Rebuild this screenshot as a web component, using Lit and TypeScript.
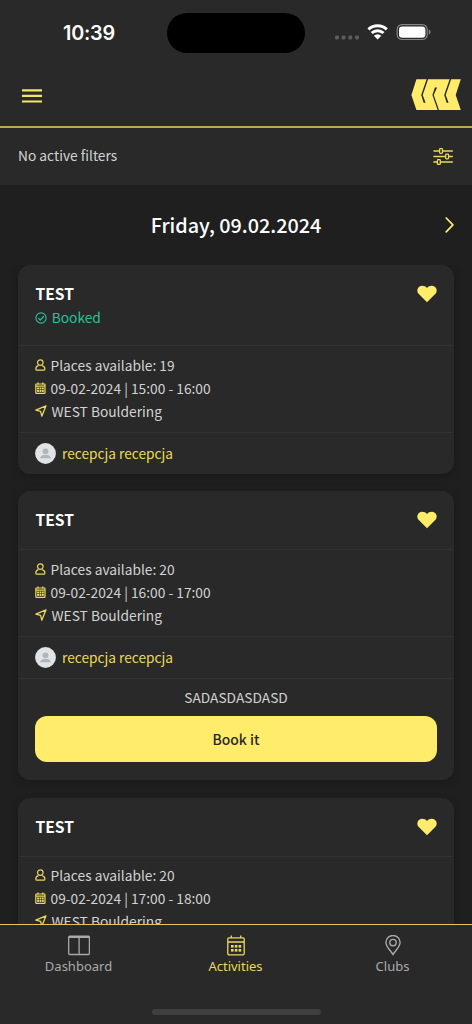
import { LitElement, html, css, svg, nothing } from "lit";
import { customElement, property } from "lit/decorators.js";

interface Activity {
  places: number;
  hours: string;
  booked?: boolean;
  note?: string;
}

const activities: Activity[] = [
  { places: 19, hours: "15:00 - 16:00", booked: true },
  { places: 20, hours: "16:00 - 17:00", note: "SADASDASDASD" },
  { places: 20, hours: "17:00 - 18:00" },
];

const calendarDots = (x: number, y: number, dx: number, dy: number, s: number) =>
  [0, 1, 2].map((c) =>
    [0, 1].map(
      (r) =>
        svg`<rect x=${x + c * dx} y=${y + r * dy} width=${s} height=${s} fill="currentColor" stroke="none"/>`
    )
  );

@customElement("activity-card")
class ActivityCard extends LitElement {
  @property({ attribute: false }) item!: Activity;

  static styles = css`
    :host {
      display: block;
      flex: none;
      background: #292929;
      border-radius: 12px;
      box-shadow: 0 2px 8px rgba(0, 0, 0, 0.22);
      font-size: 13.75px;
      color: #d2d2d2;
    }
    svg {
      display: block;
      flex: none;
    }
    .head {
      display: flex;
      justify-content: space-between;
      padding: 17px 17px 0 17.5px;
      height: 41px;
    }
    .head.tall {
      height: 63px;
    }
    .title {
      font-size: 15.6px;
      font-weight: 700;
      line-height: 23px;
      color: #fff;
    }
    .booked {
      display: flex;
      align-items: center;
      gap: 5px;
      margin-left: -0.8px;
      line-height: 23px;
      color: #28c097;
      padding-top: 1px;
    }
    .heart {
      margin-top: 2px;
      color: #ffec6b;
    }
    .info {
      border-top: 1px solid #313131;
      padding: 7px 17px 9.5px;
    }
    .row {
      display: flex;
      align-items: center;
      height: 23px;
      white-space: nowrap;
    }
    .row svg,
    .trainer {
      color: #e9d95a;
    }
    .row .text {
      padding-left: 4.5px;
    }
    .trainer {
      display: flex;
      align-items: center;
      gap: 6px;
      height: 41px;
      padding: 0 17px;
      border-top: 1px solid #313131;
      font-size: 13.7px;
    }
    .book {
      border-top: 1px solid #313131;
      padding: 6.4px 17.3px 18.1px;
      text-align: center;
    }
    .note {
      line-height: 24px;
      font-size: 13.75px;
    }
    .button {
      display: block;
      width: 100%;
      height: 46px;
      margin-top: 6.6px;
      border: 0;
      border-radius: 12px;
      padding: 0;
      background: #ffec6b;
      color: #292929;
      font: 500 13.9px "Noto Sans CJK SC", sans-serif;
    }
  `;

  render() {
    const { places, hours, booked, note } = this.item;
    return html`
      <div class="head ${booked ? "tall" : ""}">
        <div>
          <div class="title">TEST</div>
          ${booked
            ? html`<div class="booked">
                <svg width="12" height="12" viewBox="0 0 12 12" fill="none" stroke="currentColor" stroke-width="1.1">
                  <circle cx="6" cy="6" r="5.1" />
                  <path d="M3.3 6.1 5.2 8 8.9 4.3" stroke-width="1.3" />
                </svg>
                <span>Booked</span>
              </div>`
            : nothing}
        </div>
        <svg class="heart" width="20" height="20" viewBox="0 0 20 20">
          <path
            fill="currentColor"
            d="M10 18.2 1.8 10.1C.4 8.6.1 6.9.5 5.3 1.1 3.1 3 1.7 5.2 1.7 7.2 1.7 8.8 2.4 10 3.9 11.2 2.4 12.8 1.7 14.8 1.7 17 1.7 18.9 3.1 19.5 5.3 19.9 6.9 19.6 8.6 18.2 10.1Z"
          />
        </svg>
      </div>
      <div class="info">
        <div class="row">
          <svg width="11" height="12" viewBox="0 0 11 12" fill="none" stroke="currentColor" stroke-width="1.2">
            <circle cx="5.3" cy="3.6" r="2.8" />
            <path d="M3.4 6.6C1.6 7.2.8 8.2.8 9.9Q.8 11.2 2 11.2H8.6Q9.9 11.2 9.9 9.9C9.9 8.2 9 7.2 7.2 6.6" />
          </svg>
          <span class="text">Places available: ${places}</span>
        </div>
        <div class="row">
          <svg width="11" height="12" viewBox="0 0 11 12" fill="none" stroke="currentColor">
            <rect x="0.8" y="2" width="9.2" height="9.3" rx="0.6" stroke-width="1.2" />
            <path d="M1 4.2H10M3 .4V2.5M7.8 .4V2.5" stroke-width="1.3" />
            ${calendarDots(2.1, 5.5, 2.4, 2.5, 1.9)}
          </svg>
          <span class="text">09-02-2024 | ${hours}</span>
        </div>
        <div class="row">
          <svg width="12" height="12" viewBox="0 0 12 12" fill="none" stroke="currentColor" stroke-width="1.3" stroke-linejoin="round">
            <path d="M11 .8 .8 5.1 5.6 6.3 6.8 11.2Z" />
          </svg>
          <span class="text">WEST Bouldering</span>
        </div>
      </div>
      <div class="trainer">
        <svg width="21" height="21" viewBox="0 0 21 21">
          <circle cx="10.5" cy="10.5" r="10.4" fill="#e1e4e6" />
          <circle cx="10.5" cy="8.3" r="2.9" fill="#afb5b9" />
          <path d="M5 15.3C5.2 12.9 7.5 12.3 8.7 11.9H12.3C13.5 12.3 15.8 12.9 16 15.3Z" fill="#afb5b9" />
        </svg>
        <span>recepcja recepcja</span>
      </div>
      ${note
        ? html`<div class="book">
            <div class="note">${note}</div>
            <button class="button">Book it</button>
          </div>`
        : nothing}
    `;
  }
}

@customElement("app-root")
class AppRoot extends LitElement {
  static styles = css`
    :host {
      display: flex;
      flex-direction: column;
      height: 1024px;
      overflow: hidden;
      background: #1f1f1f;
      color: #d2d2d2;
      font-family: "Noto Sans CJK SC", sans-serif;
    }
    svg {
      display: block;
      flex: none;
    }
    .status {
      display: grid;
      grid-template-columns: 167px 138px 1fr;
      flex: none;
      height: 66px;
      background: #292929;
    }
    .time {
      padding: 20.5px 0 0 63px;
      font: 600 19.8px/25px Inter, sans-serif;
      letter-spacing: -0.2px;
      color: #fff;
    }
    .island {
      height: 40.5px;
      margin-top: 12.5px;
      border-radius: 21px;
      background: #000;
    }
    .signals {
      padding: 22px 0 0 29px;
    }
    .header {
      display: flex;
      flex: none;
      justify-content: space-between;
      height: 60px;
      padding: 0 11px 0 22px;
      background: #292929;
      border-bottom: 2px solid #bba958;
    }
    .menu {
      margin-top: 22px;
    }
    .logo {
      margin-top: 13px;
    }
    .filters {
      display: flex;
      flex: none;
      justify-content: space-between;
      height: 57px;
      padding: 0 19px 0 18px;
      background: #292929;
      font-size: 13.75px;
      line-height: 55px;
    }
    .filters svg {
      margin-top: 19px;
    }
    .date {
      display: grid;
      grid-template-columns: 1fr auto 1fr;
      flex: none;
      height: 80px;
      padding: 0 18px;
      color: #fff;
      font-size: 19.8px;
      font-weight: 500;
      line-height: 80px;
    }
    .date svg {
      grid-column: 3;
      justify-self: end;
      margin-top: 32px;
    }
    .day {
      grid-column: 2;
    }
    .list {
      display: flex;
      flex-direction: column;
      flex: 1;
      min-height: 0;
      gap: 17.8px;
      padding: 0 18px;
      overflow: hidden;
    }
    .nav {
      display: grid;
      grid-template-columns: repeat(3, 1fr);
      flex: none;
      height: 75px;
      padding-right: 1px;
      border-top: 1.5px solid #e2c755;
      background: #292929;
      font: 13px/18px "Noto Sans", sans-serif;
      color: #a9a9a9;
    }
    .tab {
      display: flex;
      flex-direction: column;
      align-items: center;
      gap: 1px;
      padding-top: 10px;
    }
    .active {
      color: #e9d95a;
    }
    .home {
      display: flex;
      flex: none;
      justify-content: center;
      height: 24px;
      background: #292929;
    }
    .pill {
      width: 169px;
      height: 6px;
      margin-top: 9px;
      border-radius: 3px;
      background: #3f3f3f;
    }
  `;

  render() {
    return html`
      <div class="status">
        <div class="time">10:39</div>
        <div class="island"></div>
        <div class="signals">
          <svg width="98" height="20" viewBox="0 0 98 20">
            ${[1, 7.6, 14.3, 21].map(
              (x) => svg`<rect x=${x} y="13.4" width="4" height="4" rx="1.3" fill="#5c5c5c"/>`
            )}
            <g fill="none" stroke="#fff" stroke-width="3">
              <path d="M34.4 7.3A13.5 13.5 0 0 1 52.8 7.3" />
              <path d="M37.7 11A8.7 8.7 0 0 1 49.5 11" />
            </g>
            <path d="M43.6 17.4 39.9 13.7A5.3 5.3 0 0 1 47.3 13.7Z" fill="#fff" />
            <rect x="63.2" y="2.6" width="30" height="14.9" rx="4.8" fill="none" stroke="#858585" stroke-width="1.2" />
            <rect x="65" y="4.4" width="26.4" height="11.3" rx="3.3" fill="#fff" />
            <path d="M94.8 7.6Q96.6 8.2 96.6 10T94.8 12.4Z" fill="#858585" />
          </svg>
        </div>
      </div>

      <div class="header">
        <svg class="menu" width="20" height="16" viewBox="0 0 20 16" stroke="#f4e565" stroke-width="2.2">
          <path d="M0 2.3H20M0 7.9H20M0 13.5H20" />
        </svg>
        <svg class="logo" width="50" height="32" viewBox="0 0 50 32">
          <path d="M5.4 .2H49.8L44.7 16 49.8 31.1H5.4L.4 16Z" fill="#ffec6b" />
          <g fill="#292929">
            <path d="M15.7 0H17.2L11.7 16 14.6 23.7H12.6L10.2 16Z" />
            <path d="M23.9 8.4H26.1L22.7 16 28.4 32H27L21.4 16Z" />
            <path d="M38.7 0H40.2L34.7 16 37.6 23.7H35.6L33.2 16Z" />
          </g>
        </svg>
      </div>

      <div class="filters">
        <span>No active filters</span>
        <svg width="20" height="18" viewBox="0 0 20 18" fill="none" stroke="#e9d95a" stroke-width="1.3">
          <path d="M.4 4H6.5M9.5 4H19.8M.4 9.5H12.5M15.7 9.5H19.8M.4 15H4.3M7.4 15H19.8" />
          <rect x="6.6" y="1.6" width="2.9" height="4.8" rx=".8" />
          <rect x="12.7" y="7.1" width="2.9" height="4.8" rx=".8" />
          <rect x="4.4" y="12.6" width="2.9" height="4.8" rx=".8" />
        </svg>
      </div>

      <div class="date">
        <span class="day">Friday, 09.02.2024</span>
        <svg width="9" height="16" viewBox="0 0 9 16" fill="none" stroke="#ffec6b" stroke-width="1.7" stroke-linecap="round" stroke-linejoin="round">
          <path d="M1.2 1 7.9 7.9 1.2 14.8" />
        </svg>
      </div>

      <div class="list">
        ${activities.map((a) => html`<activity-card .item=${a}></activity-card>`)}
      </div>

      <div class="nav">
        <div class="tab">
          <svg width="22" height="21" viewBox="0 0 22 21" fill="none" stroke="currentColor" stroke-width="1.3">
            <rect x=".7" y="1.2" width="20.7" height="18.3" rx="1" />
            <path d="M.8 2H21.3" stroke-width="2" />
            <path d="M11.1 2V19.4" />
          </svg>
          <span>Dashboard</span>
        </div>
        <div class="tab active">
          <svg width="18" height="21" viewBox="0 0 18 21" fill="none" stroke="currentColor" stroke-width="1.3">
            <rect x=".8" y="2.8" width="16.4" height="17" rx="1.2" />
            <path d="M1 7H17M4.3 .5V3M13.7 .5V3" />
            ${calendarDots(4, 10, 3.8, 4, 2.6)}
          </svg>
          <span>Activities</span>
        </div>
        <div class="tab">
          <svg width="16" height="21" viewBox="0 0 16 21" fill="none" stroke="currentColor" stroke-width="1.4">
            <path d="M8 19.4C6.5 16.6.9 11.8.9 7.4A7.1 6.9 0 0 1 15.1 7.4C15.1 11.8 9.5 16.6 8 19.4Z" />
            <circle cx="8" cy="7.6" r="3.2" />
          </svg>
          <span>Clubs</span>
        </div>
      </div>
      <div class="home"><div class="pill"></div></div>
    `;
  }
}
